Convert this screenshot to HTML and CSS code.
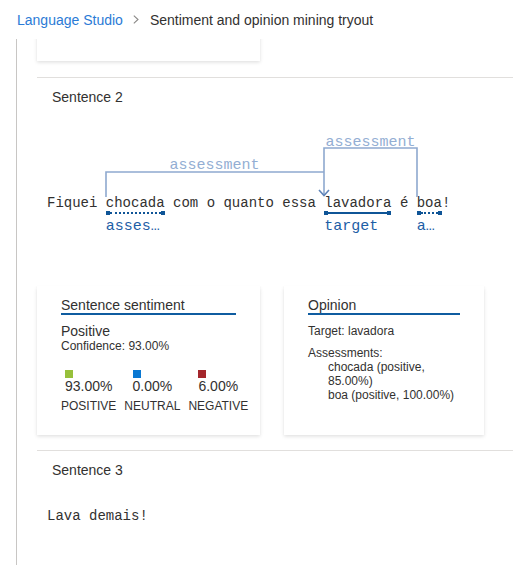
FILE: index.html
```html
<!DOCTYPE html>
<html lang="en">
<head>
<meta charset="utf-8">
<title>Sentiment and opinion mining tryout</title>
<link rel="stylesheet" href="styles.css">
</head>
<body>
<header class="crumbs">
  <span class="crumb-link">Language Studio</span>
  <svg class="chev" width="6" height="9" viewBox="0 0 6 9"><path d="M0.8 0.6 L5 4.5 L0.8 8.4" fill="none" stroke="#8a8886" stroke-width="1.1"/></svg>
  <span class="crumb-current">Sentiment and opinion mining tryout</span>
</header>
<main class="main">
  <div class="card card-top"></div>

  <section class="sentence-section">
    <div class="sentence-title">Sentence 2</div>
    <div class="sentence sentence-annotated"><svg class="arcs" width="477" height="100" viewBox="0 0 477 100">
        <path d="M69 90 V65 H287" fill="none" stroke="#8ea9cf" stroke-width="1.6"/>
        <path d="M380 90 V41 H287 V88" fill="none" stroke="#8ea9cf" stroke-width="1.6"/>
        <path d="M282 83 L287 88.5 L292 83" fill="none" stroke="#5f84b8" stroke-width="1.6"/>
        <text x="177.5" y="62" class="arc-label" text-anchor="middle">assessment</text>
        <text x="333.5" y="38.5" class="arc-label" text-anchor="middle">assessment</text>
      </svg><span class="plain">Fiquei </span><span class="tok"><span class="word">chocada</span><span class="uline dotted"><i class="cap"></i><i class="bar"></i><i class="cap"></i></span><span class="tag">asses…</span></span><span class="plain"> com o quanto essa </span><span class="tok"><span class="word">lavadora</span><span class="uline"><i class="cap"></i><i class="bar"></i><i class="cap"></i></span><span class="tag">target</span></span><span class="plain"> é </span><span class="tok"><span class="word">boa</span><span class="uline dotted"><i class="cap"></i><i class="bar"></i><i class="cap"></i></span><span class="tag">a…</span></span><span class="plain">!</span></div>

    <div class="cards">
      <div class="card card-info">
        <div class="card-title">Sentence sentiment</div>
        <div class="label-main">Positive</div>
        <div class="small">Confidence: 93.00%</div>
        <div class="stats">
          <div class="stat">
            <div class="stat-top"><i class="swatch sw-pos"></i><span class="pct">93.00%</span></div>
            <div class="stat-name">POSITIVE</div>
          </div>
          <div class="stat">
            <div class="stat-top"><i class="swatch sw-neu"></i><span class="pct">0.00%</span></div>
            <div class="stat-name">NEUTRAL</div>
          </div>
          <div class="stat">
            <div class="stat-top"><i class="swatch sw-neg"></i><span class="pct">6.00%</span></div>
            <div class="stat-name">NEGATIVE</div>
          </div>
        </div>
      </div>
      <div class="card card-info card-opinion">
        <div class="card-title">Opinion</div>
        <div class="small target">Target: lavadora</div>
        <div class="small assess-head">Assessments:</div>
        <div class="small assess-list">
          <div>chocada (positive, 85.00%)</div>
          <div>boa (positive, 100.00%)</div>
        </div>
      </div>
    </div>
  </section>

  <section class="sentence-section">
    <div class="sentence-title">Sentence 3</div>
    <div class="sentence sentence-plain">Lava demais!</div>
  </section>
</main>
</body>
</html>
```
FILE: styles.css
```css
* { box-sizing: border-box; }
html, body { margin: 0; padding: 0; background: #fff; }
body {
  font-family: "Liberation Sans", Arial, sans-serif;
  color: #323130;
  width: 514px;
  height: 565px;
  overflow: hidden;
}
.crumbs {
  height: 39px;
  display: flex;
  align-items: center;
  padding-left: 17px;
  font-size: 14px;
  line-height: 20px;
}
.crumb-link { color: #2b7bd6; }
.chev { margin: 0 11px 0 10px; }
.crumb-current { color: #323130; }

.main {
  margin-left: 16px;
  border-left: 1px solid #c8c6c4;
  padding-left: 20px;
  height: 526px;
  overflow: hidden;
}
.card {
  background: #fff;
  box-shadow: 0 1.6px 3.6px rgba(0,0,0,0.13), 0 0.3px 0.9px rgba(0,0,0,0.11);
}
.card-top {
  width: 223px;
  height: 122px;
  margin-top: -100px;
}
.sentence-section {
  margin-top: 16px;
  margin-right: 1px;
  border-top: 1px solid #e1dfdd;
}
.sentence-section + .sentence-section { margin-top: 15px; }
.sentence-title {
  padding: 9px 0 0 15px;
  font-size: 14px;
  line-height: 20px;
}
.sentence {
  font-family: "Liberation Mono", "Courier New", monospace;
  font-size: 14px;
  line-height: 20px;
  color: #323130;
  padding-left: 10px;
}
.plain { white-space: pre; }
.sentence-annotated {
  position: relative;
  padding-top: 86px;
  padding-bottom: 50px;
}
.sentence-plain { padding-top: 26px; }
.arcs {
  position: absolute;
  left: 0;
  top: 0;
}
.arc-label {
  font-family: "Liberation Mono", monospace;
  font-size: 15px;
  fill: #93aed3;
}
.tok {
  display: inline-flex;
  flex-direction: column;
  vertical-align: baseline;
}
.word { line-height: 16px; }
.uline {
  display: flex;
  align-items: center;
  height: 4px;
}
.cap {
  width: 4px;
  height: 4px;
  background: #0f5597;
  flex: none;
}
.bar {
  flex: 1;
  border-top: 2px solid #0f5597;
}
.dotted .bar { border-top-style: dotted; }
.tag {
  font-size: 15px;
  line-height: 18px;
  margin-top: 3px;
  color: #1d5ea6;
  white-space: nowrap;
  width: 0;
  overflow: visible;
}

.cards {
  display: flex;
  gap: 24px;
  align-items: stretch;
}
.card-info {
  padding: 11px 24px 22px;
}
.cards .card-info:first-child { width: 223px; }
.card-opinion { width: 200px; }
.card-title {
  font-size: 14px;
  line-height: 16px;
  border-bottom: 2px solid #0f5ca0;
}
.label-main {
  font-size: 14px;
  line-height: 16px;
  margin-top: 8px;
}
.small {
  font-size: 12px;
  line-height: 14px;
}
.stats {
  display: flex;
  gap: 8px;
  margin-top: 17px;
  white-space: nowrap;
}
.stat {
  display: flex;
  flex-direction: column;
  align-items: center;
}
.stat-top {
  display: flex;
  flex-direction: column;
  align-items: flex-start;
}
.swatch {
  width: 8px;
  height: 8px;
  display: block;
}
.sw-pos { background: #97c03b; }
.sw-neu { background: #0a78d2; }
.sw-neg { background: #a4262c; }
.pct {
  font-size: 14px;
  line-height: 16px;
}
.stat-name {
  font-size: 12px;
  line-height: 14px;
  margin-top: 5px;
}
.target { margin-top: 9px; }
.assess-head { margin-top: 8px; }
.assess-list { padding-left: 20px; }
```
